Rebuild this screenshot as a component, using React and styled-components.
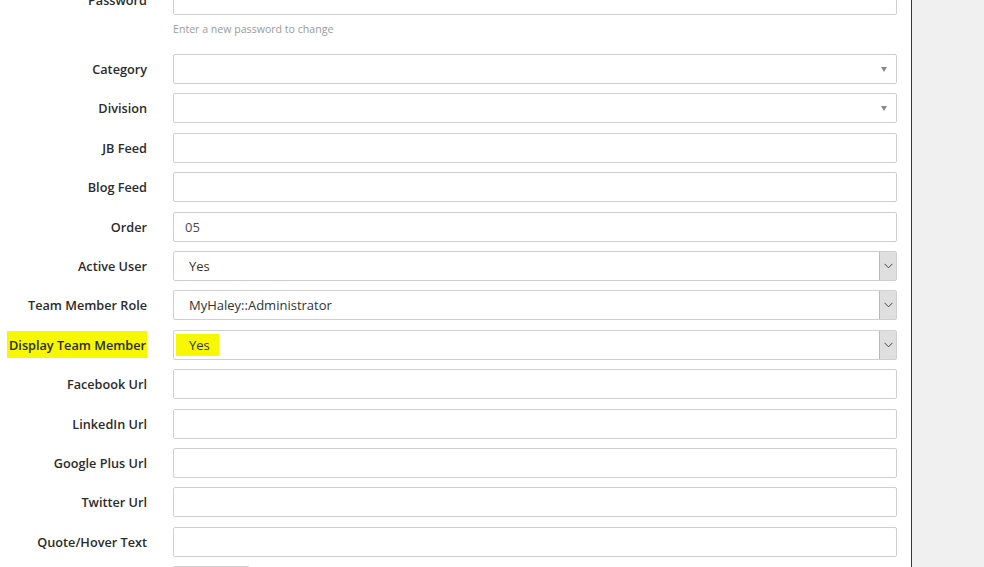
import React from 'react';
import styled, { createGlobalStyle } from 'styled-components';

const GlobalStyle = createGlobalStyle`
  html, body {
    margin: 0;
    padding: 0;
    height: 100%;
    overflow: hidden;
    background: #f0f0f0;
  }
  body {
    font-family: 'Open Sans', 'Noto Sans', Arial, sans-serif;
    color: #333;
  }
`;

const Page = styled.div`
  display: flex;
  height: 567px;
`;

const Main = styled.main`
  width: 911px;
  background: #fff;
  border-right: 1px solid #2d2a8c;
  overflow: hidden;
`;

const Side = styled.aside`
  flex: 1;
  background: #f0f0f0;
`;

const Form = styled.form`
  display: flex;
  flex-direction: column;
  gap: 9.42px;
  margin-top: -15px;
`;

const Group = styled.div`
  display: grid;
  grid-template-columns: 147px 724px;
  column-gap: 26px;
  align-items: start;
`;

const Label = styled.label`
  text-align: right;
  font-size: 12.7px;
  font-weight: 600;
  line-height: 30px;
  color: #2b2b2b;
  white-space: nowrap;
`;

const Marked = styled.span`
  background: #f7f700;
  padding: 5px 1px 4px 2px;
`;

const Field = styled.div`
  display: flex;
  flex-direction: column;
`;

const Input = styled.div`
  box-sizing: border-box;
  height: 30px;
  border: 1px solid #cfcfcf;
  border-radius: 2px;
  padding: 0 11px;
  font-size: 13px;
  line-height: 28px;
  color: #4a4a55;
  background: #fff;
`;

const Help = styled.div`
  font-size: 10.6px;
  color: #9a9a9a;
  line-height: 16px;
  padding: 6px 0 7.6px;
`;

const Select = styled.div`
  box-sizing: border-box;
  height: 30px;
  border: 1px solid #cfcfcf;
  border-radius: 2px;
  display: flex;
  align-items: center;
  background: #fff;
  font-size: 13px;
  color: #333;
`;

const SelectValue = styled.span`
  flex: 1;
  padding-left: 15px;
  line-height: 28px;
`;

const ValueMark = styled.span`
  background: #f7f700;
  margin-left: -13px;
  padding: 2px 9px 2px 13px;
`;

const Caret = styled.span`
  width: 0;
  height: 0;
  margin-right: 9px;
  border-left: 3.5px solid transparent;
  border-right: 3.5px solid transparent;
  border-top: 5px solid #8a8a8a;
`;

const DropButton = styled.span`
  box-sizing: border-box;
  width: 17px;
  height: 28px;
  background: #dfdfdf;
  border-left: 1px solid #b9b9b9;
  display: flex;
  align-items: center;
  justify-content: center;
`;

const SaveButton = styled.div`
  width: 75px;
  height: 30px;
  margin-left: 173px;
  border: 1px solid #cfcfcf;
  border-radius: 2px;
`;

function Chevron() {
  return (
    <svg width="9" height="6" viewBox="0 0 9 6">
      <polyline points="0.5,0.8 4.5,4.8 8.5,0.8" fill="none" stroke="#444" strokeWidth="1" />
    </svg>
  );
}

function Row({ label, marked, children }) {
  return (
    <Group>
      <Label>{marked ? <Marked>{label}</Marked> : label}</Label>
      <Field>{children}</Field>
    </Group>
  );
}

function NativeSelect({ value, marked }) {
  return (
    <Select>
      <SelectValue>{marked ? <ValueMark>{value}</ValueMark> : value}</SelectValue>
      <DropButton>
        <Chevron />
      </DropButton>
    </Select>
  );
}

function PickSelect() {
  return (
    <Select>
      <SelectValue />
      <Caret />
    </Select>
  );
}

export default function App() {
  const urls = ['Facebook Url', 'LinkedIn Url', 'Google Plus Url', 'Twitter Url', 'Quote/Hover Text'];

  return (
    <Page>
      <GlobalStyle />
      <Main>
        <Form>
          <Row label="Password">
            <Input />
            <Help>Enter a new password to change</Help>
          </Row>
          <Row label="Category">
            <PickSelect />
          </Row>
          <Row label="Division">
            <PickSelect />
          </Row>
          <Row label="JB Feed">
            <Input />
          </Row>
          <Row label="Blog Feed">
            <Input />
          </Row>
          <Row label="Order">
            <Input>05</Input>
          </Row>
          <Row label="Active User">
            <NativeSelect value="Yes" />
          </Row>
          <Row label="Team Member Role">
            <NativeSelect value="MyHaley::Administrator" />
          </Row>
          <Row label="Display Team Member" marked>
            <NativeSelect value="Yes" marked />
          </Row>
          {urls.map((u) => (
            <Row key={u} label={u}>
              <Input />
            </Row>
          ))}
          <SaveButton />
        </Form>
      </Main>
      <Side />
    </Page>
  );
}
